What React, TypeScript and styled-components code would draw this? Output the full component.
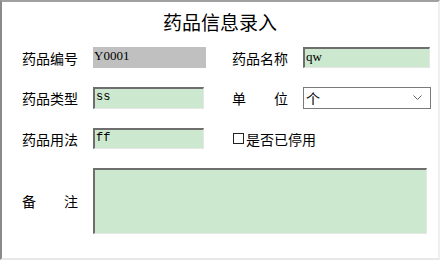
import React from "react";
import styled, { createGlobalStyle } from "styled-components";

const GlobalStyle = createGlobalStyle`
    html, body {
        margin: 0;
        padding: 0;
        background: #ffffff;
    }
    body {
        font-family: "Noto Sans CJK SC", "Liberation Sans", sans-serif;
    }
`;

const Window = styled.div`
    width: 440px;
    height: 260px;
    box-sizing: border-box;
    border-style: solid;
    border-width: 2px 2px 2px 2px;
    border-color: #a0a0a0 #f0f0f0 #e8e8e8 #8a8a8a;
    background: #ffffff;
    display: flex;
    flex-direction: column;
`;

const Title = styled.div`
    font-size: 19px;
    line-height: 24px;
    color: #000;
    text-align: center;
    margin-top: 8px;
`;

const Form = styled.div`
    display: grid;
    grid-template-columns: 71px 113px 26px 71px 128px;
    grid-template-rows: 21px 22px 21px 66px;
    row-gap: 19px;
    margin-top: 13px;
    margin-left: 20px;
    align-items: center;
`;

const Label = styled.div<{ $col?: number }>`
    grid-column: ${(p) => p.$col ?? 1};
    width: 56px;
    font-size: 14px;
    line-height: 20px;
    color: #000;
    white-space: nowrap;
`;

const SpacedLabel = styled(Label)`
    display: flex;
    justify-content: space-between;
`;

const Field = styled.div<{ $readonly?: boolean; $width?: number }>`
    width: ${(p) => p.$width ?? 111}px;
    height: 100%;
    box-sizing: border-box;
    background: ${(p) => (p.$readonly ? "#c0c0c0" : "#cce8cf")};
    border-style: solid;
    border-width: ${(p) => (p.$readonly ? "0" : "2px 1px 1px 2px")};
    border-color: #6e6e6e #e6e6e6 #e6e6e6 #6e6e6e;
    font-family: "Liberation Mono", monospace;
    font-size: 12px;
    line-height: ${(p) => (p.$readonly ? "18px" : "16px")};
    padding-left: 1px;
    color: #000;
`;

const SerifField = styled(Field)`
    font-family: "Liberation Serif", serif;
    font-size: 13px;
`;

const Select = styled.div`
    width: 128px;
    height: 22px;
    box-sizing: border-box;
    border: 1px solid #7a7a7a;
    background: #fff;
    display: flex;
    align-items: center;
    justify-content: space-between;
    padding: 0 8px 0 2px;
    font-size: 14px;
    color: #000;
`;

const Check = styled.label`
    grid-column: 4 / span 2;
    display: flex;
    align-items: center;
    gap: 2px;
    font-size: 14px;
    line-height: 20px;
    color: #000;
`;

const Box = styled.span`
    width: 11px;
    height: 11px;
    box-sizing: border-box;
    border: 1px solid #222;
    margin-left: 1px;
`;

const Note = styled.div`
    grid-column: 2 / span 4;
    width: 334px;
    height: 66px;
    box-sizing: border-box;
    background: #cce8cf;
    border-style: solid;
    border-width: 2px 1px 1px 2px;
    border-color: #6e6e6e #e6e6e6 #e6e6e6 #6e6e6e;
`;

const Chevron = () => (
    <svg width="9" height="6" viewBox="0 0 9 6">
        <polyline points="0.5,0.5 4.5,4.5 8.5,0.5" fill="none" stroke="#666" strokeWidth="1" />
    </svg>
);

const App = () => (
    <>
        <GlobalStyle />
        <Window>
            <Title>药品信息录入</Title>
            <Form>
                <Label>药品编号</Label>
                <SerifField $readonly $width={113}>Y0001</SerifField>
                <Label $col={4}>药品名称</Label>
                <SerifField $width={127}>qw</SerifField>

                <Label>药品类型</Label>
                <Field>ss</Field>
                <SpacedLabel $col={4}><span>单</span><span>位</span></SpacedLabel>
                <Select>
                    <span>个</span>
                    <Chevron />
                </Select>

                <Label>药品用法</Label>
                <Field>ff</Field>
                <Check><Box />是否已停用</Check>

                <SpacedLabel><span>备</span><span>注</span></SpacedLabel>
                <Note />
            </Form>
        </Window>
    </>
);

export default App;
